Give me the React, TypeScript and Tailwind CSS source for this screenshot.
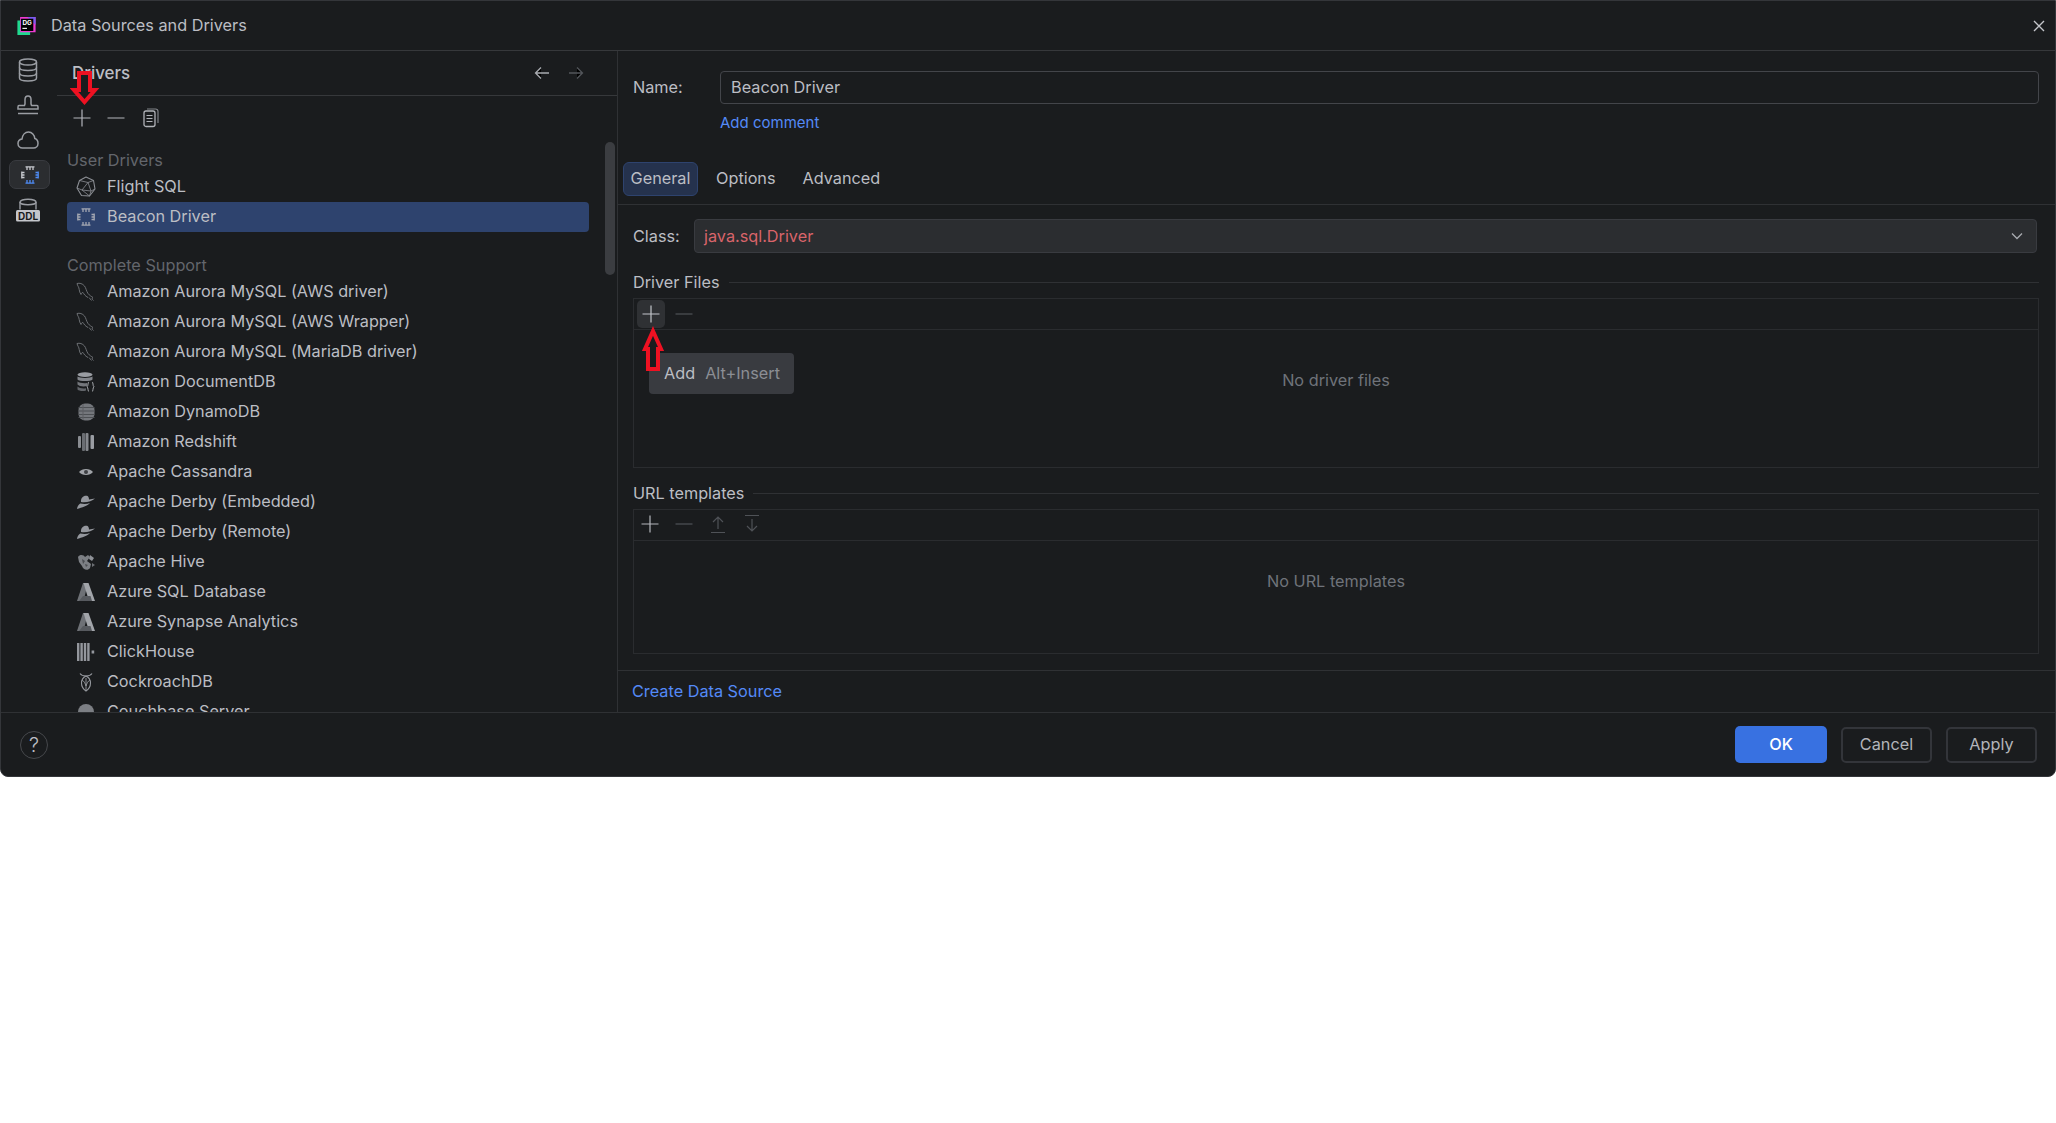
import React from "react";

const G = "#9a9da3";
const FS = "text-[16.25px]";

const svg = (w: number, h: number, vb: string, kids: React.ReactNode) => (
  <svg width={w} height={h} viewBox={vb} fill="none" className="shrink-0">{kids}</svg>
);

const Plus = ({ c = "#b4b6bc" }: { c?: string }) => svg(20, 20, "0 0 20 20", <path d="M10 1.5V18.5M1.5 10H18.5" stroke={c} strokeWidth="1.2" />);
const Minus = ({ c = "#b4b6bc" }: { c?: string }) => svg(20, 20, "0 0 20 20", <path d="M1.5 10H18.5" stroke={c} strokeWidth="1.2" />);

const Dolphin = () => svg(20, 20, "0 0 20 20", (
  <g stroke="#74777c" strokeWidth="0.9" fill="none">
    <path d="M1 1.5C3.5 .8 6.5 1.5 8.5 4C10 6 10.3 9 12 11.5C13.5 13.5 15.5 14.5 17 15.5C16 16 15.5 17 17.5 18.5" />
    <path d="M1 1.5C1.5 4 3 5 3.2 7.5C3.4 9.5 4 11 5 12.5C5.5 11 6 10.5 7 10.5C8 12 9 14 12 15.5" />
    <path d="M13 15.5L15.5 18.5" />
  </g>
));

const Facet = ({ c = "#8b8e94" }: { c?: string }) => svg(20, 22, "0 0 20 22", (
  <g stroke={c} strokeWidth="1.1" strokeLinejoin="round">
    <path d="M10 1L17.5 4.5L19 13L13.5 20L5.5 19.5L1 12L3.5 4.5Z" />
    <path d="M3.5 4.5L12 6.5L17.5 4.5M12 6.5L6 14L1 12M6 14L13.5 20M6 14L15 15L12 6.5M15 15L19 13M15 15L13.5 20" strokeWidth="0.8" />
  </g>
));

const Beacon = ({ c1 = "#c6c8cd", c3 = "#4f8cf5", w = 18 }: { c1?: string; c3?: string; w?: number }) => svg(w, w, "0 0 18 18", (
  <g strokeWidth="1.3">
    <path d="M4.5 .8H13.5M6 .8V4M9 .8V4M12 .8V4" stroke={c1} />
    <path d="M.8 5.5V12.5M.8 6.5H3.5M.8 9H3.5M.8 11.5H3.5" stroke={c1} />
    <path d="M17.2 5.5V12.5M17.2 6.5H14.5M17.2 9H14.5M17.2 11.5H14.5" stroke={c3} />
    <path d="M4.5 17.2H13.5M6 17.2V14M9 17.2V14M12 17.2V14" stroke={c3} />
  </g>
));

const DocDB = () => svg(18, 20, "0 0 18 20", (
  <g>
    <ellipse cx="8" cy="2.6" rx="7.5" ry="2.3" fill="#9a9da3" />
    <path d="M.5 4.6C2 6.5 14 6.5 15.5 4.6V7.5C14 9.5 2 9.5 .5 7.5Z" fill="#83868c" />
    <path d="M.5 9.6C2 11.5 9 11.5 10 11V14C7 15 2 14.5 .5 12.5Z" fill="#74777c" />
    <path d="M.5 14.6C2 16.5 7 16.8 9 16.2V18.5C6 19.5 2 19 .5 17.5Z" fill="#62656a" />
    <path d="M12 10C10.5 10 11.5 14 10 14.8C11.5 15.5 10.5 19.5 12 19.5M15 10C16.5 10 15.5 14 17 14.8C15.5 15.5 16.5 19.5 15 19.5" stroke="#a8abb0" strokeWidth="1" />
  </g>
));

const Dynamo = () => svg(17, 18, "0 0 17 18", (
  <g>
    <rect x="0.5" y="0.5" width="16" height="17" rx="6.5" fill="#74777c" />
    <path d="M.5 4.5H16.5M.5 8H16.5M.5 11.5H16.5M.5 14.5H16.5" stroke="#4d5054" strokeWidth="1" />
    <path d="M5 1V17" stroke="#5c5f63" strokeWidth="1" />
  </g>
));

const Redshift = () => svg(17, 18, "0 0 17 18", (
  <g>
    <rect x="0" y="3" width="3" height="12" rx="1" fill="#8a8d92" />
    <rect x="4" y="0" width="3" height="18" rx="1" fill="#6a6d72" />
    <rect x="7.5" y="0" width="3" height="18" rx="1" fill="#85888d" />
    <rect x="12.5" y="2" width="3.5" height="14" rx="1" fill="#9a9da3" />
  </g>
));

const Cassandra = () => svg(14, 8, "0 0 14 8", (
  <g>
    <path d="M0 4C3 0 11 0 14 4C11 8 3 8 0 4Z" fill="#a0a3a8" />
    <circle cx="7" cy="4" r="2" fill="#3e4044" />
  </g>
));

const Derby = () => svg(18, 14, "0 0 18 14", (
  <g fill="#94979d">
    <path d="M4 7C3.5 2.5 7 0 10 0.8C11.5 1.3 12 3 12 4.5L18 3.5C15 6.5 9 7.8 4 7Z" />
    <path d="M3.2 8.5C7 9.2 10 9 13 8C10.5 11 5 12.5 0 14C0.3 11.5 1.5 9.5 3.2 8.5Z" />
  </g>
));

const Hive = () => svg(18, 17, "0 0 18 17", (
  <g fill="#7c7f84">
    <path d="M1 3C3 0 7 1 8 3L11 1L13 3L10 7L14 10L13 14C11 17 6 16 5 12L2 8Z" />
    <path d="M13 1L17 4L15 7L12 5Z" fill="#8f9298" />
    <path d="M15 9L18 11L15 13Z" fill="#6c6f74" />
    <path d="M5 5L8 7L6 10Z" fill="#4a4d51" />
    <path d="M8 10L11 11L9 13Z" fill="#4a4d51" />
  </g>
));

const Azure = () => svg(18, 18, "0 0 18 18", (
  <g>
    <path d="M6 0H11L6.5 18H0Z" fill="#6e7176" />
    <path d="M6.5 0H11.5L18 18H12Z" fill="#a2a5aa" />
    <path d="M6 13H13.5L15 18H2Z" fill="#575a5f" />
  </g>
));

const Click = () => svg(18, 18, "0 0 18 18", (
  <g fill="#94979d">
    <rect x="0" y="0" width="2.4" height="18" />
    <rect x="3.4" y="0" width="2.4" height="18" />
    <rect x="6.8" y="0" width="2.4" height="18" />
    <rect x="10.2" y="0" width="2.4" height="18" />
    <rect x="14.6" y="7.5" width="2.6" height="3" />
  </g>
));

const Cockroach = () => svg(14, 19, "0 0 14 19", (
  <g stroke="#94979d" strokeWidth="1.1">
    <path d="M1 .5C2 2 4 3 7 3C10 3 12 2 13 .5" />
    <path d="M7 18C4 16 2.5 13 2.5 10C2.5 7 4 4.5 7 3C10 4.5 11.5 7 11.5 10C11.5 13 10 16 7 18Z" />
    <path d="M7 5V18M3 7C5 8 6 10 7 13C8 10 9 8 11 7" strokeWidth="0.9" />
  </g>
));

const Couch = () => svg(18, 18, "0 0 18 18", (
  <g>
    <circle cx="9" cy="9" r="8" fill="#7c7f84" />
    <path d="M4 9H6V11H12V9H14V14H4Z" fill="#e2e3e6" />
  </g>
));

const rows: [string, React.ReactNode][] = [
  ["Amazon Aurora MySQL (AWS driver)", <Dolphin />],
  ["Amazon Aurora MySQL (AWS Wrapper)", <Dolphin />],
  ["Amazon Aurora MySQL (MariaDB driver)", <Dolphin />],
  ["Amazon DocumentDB", <DocDB />],
  ["Amazon DynamoDB", <Dynamo />],
  ["Amazon Redshift", <Redshift />],
  ["Apache Cassandra", <Cassandra />],
  ["Apache Derby (Embedded)", <Derby />],
  ["Apache Derby (Remote)", <Derby />],
  ["Apache Hive", <Hive />],
  ["Azure SQL Database", <Azure />],
  ["Azure Synapse Analytics", <Azure />],
  ["ClickHouse", <Click />],
  ["CockroachDB", <Cockroach />],
  ["Couchbase Server", <Couch />],
];

function Row({ icon, label, selected }: { icon: React.ReactNode; label: string; selected?: boolean }) {
  return (
    <div className={`h-[30px] w-[522px] shrink-0 flex items-center rounded-[4px] ${selected ? "bg-[#2e436e]" : ""}`}>
      <div className="w-[40px] flex items-center justify-center pr-[2px]">{icon}</div>
      <span className="text-[16.25px] pb-[1px] text-[#bcbec4] whitespace-nowrap">{label}</span>
    </div>
  );
}

function Heading({ children, className = "" }: { children: React.ReactNode; className?: string }) {
  return <div className={`h-[22px] flex items-center text-[16.25px] pb-[1px] text-[#63666c] ${className}`}>{children}</div>;
}

function Group({ title }: { title: string }) {
  return (
    <div className="h-[20px] flex items-center gap-[9px] pl-[15px] text-[16.25px] text-[#bcbec4]">
      <span className="whitespace-nowrap">{title}</span>
      <div className="flex-1 h-px bg-[#2f3134] mr-[16px]" />
    </div>
  );
}

export default function App() {
  return (
    <div className="relative w-[2056px] h-[1123px] bg-white overflow-hidden" style={{ fontFamily: "Inter, 'Liberation Sans', sans-serif" }}>
      <div className="w-[2056px] h-[777px] bg-[#1a1c1e] rounded-b-[8px] border border-[#34363a] flex flex-col overflow-hidden">
        {/* title bar */}
        <div className="h-[50px] shrink-0 flex items-center border-b border-[#36383b] pl-[15px] pr-[9px]">
          <svg width="21" height="20" viewBox="0 0 22 22" className="shrink-0">
            <path d="M1 5H15V21H1Z" fill="#20d98f" />
            <path d="M4 1H21V18H4Z" fill="#ec3bd0" />
            <path d="M12 1H21V10Z" fill="#7a5cf0" />
            <rect x="5" y="3" width="13.5" height="13.5" fill="#000" />
            <text x="11.8" y="10" textAnchor="middle" fontSize="7" fontWeight="700" fill="#fff" fontFamily="Inter, sans-serif">DG</text>
            <rect x="6.5" y="13" width="5" height="1.2" fill="#fff" />
          </svg>
          <span className={`ml-[14px] ${FS} text-[#bcbec4] whitespace-nowrap`}>Data Sources and Drivers</span>
          <svg width="14" height="14" viewBox="0 0 14 14" className="ml-auto">
            <path d="M2 2L12 12M12 2L2 12" stroke="#c4c6cb" strokeWidth="1.4" />
          </svg>
        </div>

        {/* body */}
        <div className="flex-1 flex min-h-0">
          {/* icon rail */}
          <div className="w-[56px] shrink-0 flex flex-col items-stretch">
            <div className="h-[36px] flex items-center justify-center pr-[2px] pt-[1px]">
              {svg(20, 24, "0 0 20 24", (
                <g stroke={G} strokeWidth="1.5">
                  <ellipse cx="10" cy="4" rx="8.5" ry="3" />
                  <path d="M1.5 4V20C1.5 22 5 23 10 23C15 23 18.5 22 18.5 20V4" />
                  <path d="M1.5 9.5C1.5 11.5 5 12.5 10 12.5C15 12.5 18.5 11.5 18.5 9.5M1.5 15C1.5 17 5 18 10 18C15 18 18.5 17 18.5 15" />
                </g>
              ))}
            </div>
            <div className="h-[35px] flex items-center justify-center pr-[2px]">
              {svg(22, 20, "0 0 22 20", (
                <g stroke={G} strokeWidth="1.5">
                  <path d="M8 9V4.5C8 2.5 9 1 11 1C13 1 14 2.5 14 4.5V9L14.5 10.5H20C20.5 10.5 21 11 21 12V14H1V12C1 11 1.5 10.5 2 10.5H7.5Z" />
                  <path d="M1 18.5H21" />
                </g>
              ))}
            </div>
            <div className="h-[35px] flex items-center justify-center pr-[2px]">
              {svg(22, 18, "0 0 22 18", (
                <path d="M5.5 17C3 17 1 15 1 12.5C1 10 3 8.3 5 8C5.5 4 8 1 11.5 1C15 1 17.5 4 17.8 7.5C19.8 8 21 10 21 12.5C21 15 19 17 16.5 17Z" stroke={G} strokeWidth="1.5" />
              ))}
            </div>
            <div className="h-[35px] flex items-center">
              <div className="w-[41px] h-[29px] rounded-[7px] bg-[#2b2d30] border border-[#393b40] flex items-center justify-center ml-[8px]">
                <Beacon w={18} c1="#c8cacf" c3="#4f8cf5" />
              </div>
            </div>
            <div className="h-[36px] flex flex-col items-center justify-center pr-[2px]">
              {svg(24, 24, "0 0 24 24", (
                <g>
                  <ellipse cx="12" cy="4" rx="8" ry="2.8" stroke={G} strokeWidth="1.4" />
                  <path d="M4 4V11.5M20 4V11.5" stroke={G} strokeWidth="1.4" />
                  <rect x="0" y="12" width="24" height="11.5" rx="1.5" fill="#c4c6cb" />
                  <text x="12" y="21.7" textAnchor="middle" fontSize="10" fontWeight="700" fill="#1a1c1e" fontFamily="Inter, sans-serif">DDL</text>
                </g>
              ))}
            </div>
          </div>

          {/* driver list */}
          <div className="relative w-[561px] shrink-0 border-r border-[#2f3134] flex flex-col overflow-hidden">
            <div className="h-[45px] shrink-0 border-b border-[#36383b] flex items-center pl-[15px] pr-[33px]">
              <span className="text-[16.9px] font-medium mt-[2px] text-[#bcbec4]">Drivers</span>
              <svg width="16" height="14" viewBox="0 0 16 14" className="ml-auto">
                <path d="M15 7H1.5M7 1.5L1.5 7L7 12.5" stroke="#a8abb0" strokeWidth="1.3" />
              </svg>
              <svg width="16" height="14" viewBox="0 0 16 14" className="ml-[18px]">
                <path d="M1 7H14.5M9 1.5L14.5 7L9 12.5" stroke="#53565b" strokeWidth="1.3" />
              </svg>
            </div>
            <div className="h-[44px] shrink-0 flex items-center pl-[15px] gap-[14px]">
              <Plus />
              <Minus />
              <svg width="16" height="20" viewBox="0 0 16 20" className="ml-[3px]">
                <rect x="1" y="3" width="11" height="15.5" rx="2" stroke="#b0b2b8" strokeWidth="1.3" fill="none" />
                <path d="M4 1H12.5C14 1 15 2 15 3.5V15" stroke="#808388" strokeWidth="1.2" fill="none" />
                <path d="M3.5 7.5H9.5M3.5 10.5H9.5M3.5 13.5H9.5" stroke="#b0b2b8" strokeWidth="1.2" />
              </svg>
            </div>
            <div className="flex-1 min-h-0 overflow-hidden pl-[10px] pt-[10px] flex flex-col">
              <Heading>User Drivers</Heading>
              <Row icon={<Facet />} label="Flight SQL" />
              <Row icon={<Beacon c1="#a4a8b2" c3="#a4a8b2" />} label="Beacon Driver" selected />
              <Heading className="mt-[23px]">Complete Support</Heading>
              {rows.map(([label, icon]) => (
                <Row key={label} icon={icon} label={label} />
              ))}
            </div>
            <div className="absolute left-[548px] top-[91px] w-[10px] h-[133px] rounded-full bg-[#3b3d41]" />
          </div>

          {/* detail */}
          <div className="flex-1 min-w-0 flex flex-col">
            <div className={`flex items-center pl-[15px] pr-[16px] pt-[20px] ${FS}`}>
              <span className="w-[87px] text-[#bcbec4]">Name:</span>
              <div className="flex-1 h-[33px] rounded-[4px] border border-[#43454a] flex items-center pl-[10px] text-[#bcbec4]">Beacon Driver</div>
            </div>
            <div className="h-[20px] mt-[9px] ml-[102px] flex items-center text-[15px] text-[#548af7]">Add comment</div>
            <div className={`mt-[29px] pb-[8px] border-b border-[#2f3134] flex items-center pl-[5px] ${FS} text-[#bcbec4]`}>
              <div className="w-[75px] h-[34px] pb-[2px] rounded-[6px] bg-[#25324d] border border-[#2e436e] flex items-center justify-center">General</div>
              <span className="ml-[18px] mb-[2px]">Options</span>
              <span className="ml-[27px] mb-[2px]">Advanced</span>
            </div>
            <div className={`mt-[14px] flex items-center pl-[15px] pr-[18px] ${FS}`}>
              <span className="w-[61px] text-[#bcbec4]">Class:</span>
              <div className="flex-1 h-[34px] rounded-[4px] bg-[#2b2d30] border border-[#393b40] flex items-center pl-[9px] pr-[13px] text-[#d9646a]">
                java.sql.Driver
                <svg width="12" height="8" viewBox="0 0 12 8" className="ml-auto">
                  <path d="M1 1.5L6 6.5L11 1.5" stroke="#a8abb0" strokeWidth="1.3" fill="none" />
                </svg>
              </div>
            </div>

            <div className="mt-[19px]"><Group title="Driver Files" /></div>
            <div className={`relative mt-[6px] ml-[15px] mr-[16px] h-[170px] border border-[#2a2c2f] flex flex-col ${FS}`}>
              <div className="h-[31px] shrink-0 border-b border-[#2a2c2f] flex items-center pl-[3px] pb-[1px]">
                <div className="w-[28px] h-[28px] rounded-[5px] bg-[#2f3134] flex items-center justify-center"><Plus c="#c4c6cb" /></div>
                <div className="ml-[9px]"><Minus c="#4f5257" /></div>
              </div>
              <div className="flex-1 flex items-center justify-center pb-[36px] text-[#6f737a]">No driver files</div>
              <div className="absolute left-[15px] top-[54px] w-[145px] h-[41px] rounded-[4px] bg-[#393b40] flex items-center pl-[15px] whitespace-nowrap">
                <span className="text-[#bcbec4]">Add</span>
                <span className="ml-[10px] text-[#8b8e94]">Alt+Insert</span>
              </div>
            </div>

            <div className="mt-[15px]"><Group title="URL templates" /></div>
            <div className={`mt-[6px] ml-[15px] mr-[16px] h-[145px] border border-[#2a2c2f] flex flex-col ${FS}`}>
              <div className="h-[31px] shrink-0 border-b border-[#2a2c2f] flex items-center pl-[6px] pb-[2px] gap-[14px]">
                <Plus />
                <Minus c="#4f5257" />
                <svg width="20" height="20" viewBox="0 0 20 20">
                  <path d="M10 15V3M5 8L10 3L15 8M3 18.5H17" stroke="#4f5257" strokeWidth="1.2" fill="none" />
                </svg>
                <svg width="20" height="20" viewBox="0 0 20 20">
                  <path d="M10 5V17M5 12L10 17L15 12M3 1.5H17" stroke="#4f5257" strokeWidth="1.2" fill="none" />
                </svg>
              </div>
              <div className="flex-1 flex items-center justify-center pb-[31px] text-[#6f737a]">No URL templates</div>
            </div>

            <div className={`mt-[16px] flex-1 border-t border-[#2f3134] flex items-center pl-[14px] ${FS} text-[#548af7]`}>Create Data Source</div>
          </div>
        </div>

        {/* footer */}
        <div className={`h-[64px] shrink-0 border-t border-[#2f3134] flex items-center pl-[19px] pr-[18px] ${FS}`}>
          <div className="w-[28px] h-[28px] rounded-full border border-[#46484c] flex items-center justify-center text-[20px] font-light text-[#bcbec4]">?</div>
          <button className="ml-auto w-[92px] h-[37px] rounded-[5px] bg-[#3871e1] text-white font-medium">OK</button>
          <button className="ml-[14px] w-[91px] h-[36px] rounded-[5px] border-2 border-[#33353a] text-[#b3b5ba]">Cancel</button>
          <button className="ml-[14px] w-[91px] h-[36px] rounded-[5px] border-2 border-[#33353a] text-[#b3b5ba]">Apply</button>
        </div>
      </div>

      {/* red annotation arrows */}
      <svg width="30" height="36" viewBox="0 0 30 36" className="absolute left-[70px] top-[70px]">
        <path d="M9 3H20V20H25L14.5 32L4 20H9Z" fill="#1a1c1e" stroke="#ee1122" strokeWidth="4" strokeLinejoin="miter" />
      </svg>
      <svg width="28" height="48" viewBox="0 0 28 48" className="absolute left-[640px] top-[326px]">
        <path d="M13 5L21 23H18V43H8V23H5Z" fill="#1a1c1e" stroke="#ee1122" strokeWidth="4" strokeLinejoin="miter" />
      </svg>
    </div>
  );
}
